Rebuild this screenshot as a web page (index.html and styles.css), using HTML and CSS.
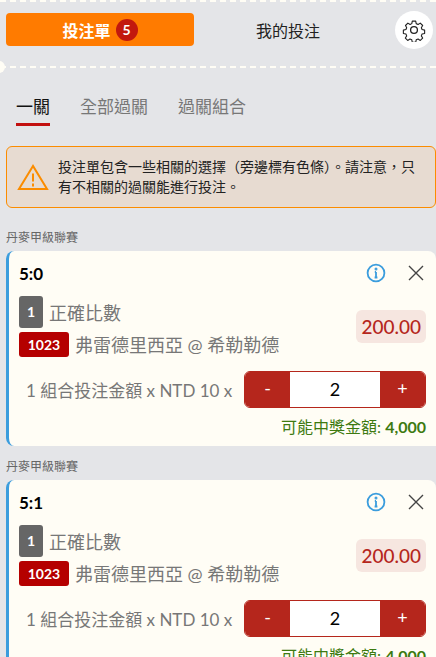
FILE: index.html
```html
<!DOCTYPE html>
<html>
  <head>
    <meta charset="utf-8">
    <link rel="stylesheet" href="styles.css">
  </head>
  <body>
    <div class="slip">
      <div class="top-edge"></div>

      <div class="head">
        <div class="head-tab active">投注單 <span class="count">5</span></div>
        <div class="head-tab">我的投注</div>
        <div class="gear">
          <svg width="24" height="24" viewBox="0 0 24 24" fill="none" stroke="#222" stroke-width="1.3" stroke-linejoin="round">
            <path d="M10 1.5h4l.6 3 2.2 1 2.6-1.6 2.8 2.8-1.6 2.600.9 2.200 3 .6v4l-3 .6-.9 2.200 1.600 2.600-2.800 2.800-2.600-1.600-2.200.9-.6 3h-4l-.6-3-2.200-.9-2.600 1.600-2.800-2.800 1.600-2.600-.9-2.200-3-.6v-4l3-.6.9-2.200L2 6.700l2.800-2.800 2.600 1.600 2-1z" transform="translate(1.800 1.800) scale(.85)"/>
            <circle cx="12" cy="12" r="3.400"/>
          </svg>
        </div>
      </div>

      <div class="divider"><span class="notch"></span></div>

      <ul class="tabs">
        <li class="on">一關</li>
        <li>全部過關</li>
        <li>過關組合</li>
      </ul>

      <div class="notice">
        <svg class="warn" width="32" height="28" viewBox="0 0 32 28" fill="none" stroke="#fb8c00" stroke-width="2">
          <path d="M16 3L2 26h28z" stroke-linejoin="miter"/>
          <path d="M16 10.500v8M16 20.500v3"/>
        </svg>
        <p>投注單包含一些相關的選擇（旁邊標有色條）。請注意，只有不相關的過關能進行投注。</p>
      </div>

      <div class="league">丹麥甲級聯賽</div>
      <div class="bet">
        <div class="bet-top">
          <b class="score">5:0</b>
          <svg class="info" width="20" height="20" viewBox="0 0 20 20" fill="none" stroke="#3b9ddd" stroke-width="1.800">
            <circle cx="10" cy="10" r="8.400"/>
            <path d="M10 9v5.500M8.600 14.500h2.800M8.800 9h1.200"/>
            <circle cx="10" cy="6" r=".6"/>
          </svg>
          <svg class="close" width="18" height="18" viewBox="0 0 18 18" stroke="#444" stroke-width="1.400">
            <path d="M2 2l14 14M16 2L2 16"/>
          </svg>
        </div>
        <div class="bet-mid">
          <div class="bet-info">
            <div class="line"><span class="num">1</span>正確比數</div>
            <div class="line"><span class="code">1023</span>弗雷德里西亞 @ 希勒勒德</div>
          </div>
          <span class="odds">200.00</span>
        </div>
        <div class="stake">
          <span class="stake-label">1 組合投注金額 x NTD 10 x</span>
          <div class="stepper">
            <span class="step">-</span>
            <span class="qty">2</span>
            <span class="step">+</span>
          </div>
        </div>
        <div class="win">可能中獎金額: <b>4,000</b></div>
      </div>

      <div class="league">丹麥甲級聯賽</div>
      <div class="bet">
        <div class="bet-top">
          <b class="score">5:1</b>
          <svg class="info" width="20" height="20" viewBox="0 0 20 20" fill="none" stroke="#3b9ddd" stroke-width="1.800">
            <circle cx="10" cy="10" r="8.400"/>
            <path d="M10 9v5.500M8.600 14.500h2.800M8.800 9h1.200"/>
            <circle cx="10" cy="6" r=".6"/>
          </svg>
          <svg class="close" width="18" height="18" viewBox="0 0 18 18" stroke="#444" stroke-width="1.400">
            <path d="M2 2l14 14M16 2L2 16"/>
          </svg>
        </div>
        <div class="bet-mid">
          <div class="bet-info">
            <div class="line"><span class="num">1</span>正確比數</div>
            <div class="line"><span class="code">1023</span>弗雷德里西亞 @ 希勒勒德</div>
          </div>
          <span class="odds">200.00</span>
        </div>
        <div class="stake">
          <span class="stake-label">1 組合投注金額 x NTD 10 x</span>
          <div class="stepper">
            <span class="step">-</span>
            <span class="qty">2</span>
            <span class="step">+</span>
          </div>
        </div>
        <div class="win">可能中獎金額: <b>4,000</b></div>
      </div>
    </div>
  </body>
</html>
```

FILE: styles.css
```css
* {
  box-sizing: border-box;
}

html,
body {
  margin: 0;
  height: 100%;
  overflow: hidden;
}

body {
  background: #e4e5e8;
  font-family: Lato, "Noto Sans CJK TC", sans-serif;
}

.slip {
  padding-left: 6px;
}

.top-edge {
  height: 13px;
  margin-left: -6px;
  border-top: 2px dashed #fffdf5;
}

.head {
  display: flex;
  align-items: center;
  height: 33px;
}

.head-tab {
  width: 188px;
  height: 33px;
  display: flex;
  align-items: center;
  justify-content: center;
  gap: 5px;
  font-size: 16px;
  color: #222;
  border-radius: 4px;
}

.head-tab.active {
  background: #ff7b00;
  color: #fff;
  font-weight: 700;
}

.count {
  width: 22px;
  height: 22px;
  border-radius: 50%;
  background: #c2180e;
  color: #fff;
  font-size: 14px;
  text-align: center;
  line-height: 22px;
}

.gear {
  width: 38px;
  height: 38px;
  margin-left: 13px;
  margin-right: -8px;
  flex-shrink: 0;
  border-radius: 50%;
  background: #fff;
  display: flex;
  align-items: center;
  justify-content: center;
}

.divider {
  position: relative;
  margin: 20px 0 0 -6px;
  border-top: 2px dashed #fffdf5;
}

.notch {
  position: absolute;
  left: -7px;
  top: -7px;
  width: 12px;
  height: 12px;
  border-radius: 50%;
  background: #fffdf5;
}

.tabs {
  display: flex;
  gap: 30px;
  list-style: none;
  margin: 0;
  padding: 27px 0 0 10px;
  font-size: 17px;
  color: #777;
}

.tabs li {
  height: 31px;
  line-height: 24px;
}

.tabs .on {
  color: #111;
  border-bottom: 3px solid #c2100f;
}

.notice {
  display: flex;
  align-items: center;
  height: 62px;
  margin-top: 20px;
  padding: 0 16px 0 10px;
  background: #e7dbd1;
  border: 1px solid #fb8c00;
  border-radius: 6px;
}

.warn {
  flex-shrink: 0;
  margin-right: 9px;
}

.notice p {
  margin: 0;
  font-size: 14px;
  line-height: 20px;
  color: #222;
}

.league {
  margin-top: 21px;
  height: 22px;
  line-height: 18px;
  font-size: 12px;
  color: #666;
  margin-left: 0;
}

.bet {
  height: 195px;
  padding: 10px 10px 0 10px;
  background: #fffdf5;
  border-left: 3px solid #3b9ddd;
  border-radius: 8px 8px 0 8px;
}

.bet + .league {
  margin-top: 12px;
}

.bet-top {
  display: flex;
  align-items: center;
  height: 24px;
}

.score {
  font-size: 17px;
  color: #000;
  margin-right: auto;
}

.info {
  margin-right: 21px;
}

.close {
  margin-right: 1px;
}

.bet-mid {
  display: flex;
  align-items: center;
  justify-content: space-between;
  margin-top: 11px;
}

.line {
  display: flex;
  align-items: center;
  font-size: 18px;
  color: #777;
}

.line + .line {
  margin-top: 3px;
}

.num {
  width: 24px;
  height: 32px;
  margin-right: 6px;
  border-radius: 3px;
  background: #666;
  color: #fff;
  font-size: 14px;
  font-weight: 700;
  text-align: center;
  line-height: 32px;
}

.code {
  width: 50px;
  height: 25px;
  margin-right: 6px;
  border-radius: 3px;
  background: #b50000;
  color: #fff;
  font-size: 14px;
  font-weight: 700;
  text-align: center;
  line-height: 25px;
}

.odds {
  padding: 0 5px;
  height: 33px;
  line-height: 33px;
  border-radius: 6px;
  background: #f6e6e0;
  color: #b5261c;
  font-size: 19px;
  font-weight: 500;
}

.stake {
  display: flex;
  align-items: center;
  justify-content: space-between;
  margin-top: 14px;
}

.stake-label {
  padding-left: 7px;
  font-size: 17px;
  color: #777;
}

.stepper {
  display: flex;
  width: 182px;
  height: 37px;
  border: 1px solid #b5261c;
  border-radius: 6px;
  overflow: hidden;
}

.step {
  width: 45px;
  background: #b5261c;
  color: #fff;
  text-align: center;
  line-height: 33px;
  font-size: 18px;
}

.qty {
  flex: 1;
  background: #fff;
  color: #000;
  text-align: center;
  line-height: 35px;
  font-size: 18px;
}

.win {
  margin-top: 6px;
  text-align: right;
  font-size: 16px;
  color: #3d7a10;
}
```
